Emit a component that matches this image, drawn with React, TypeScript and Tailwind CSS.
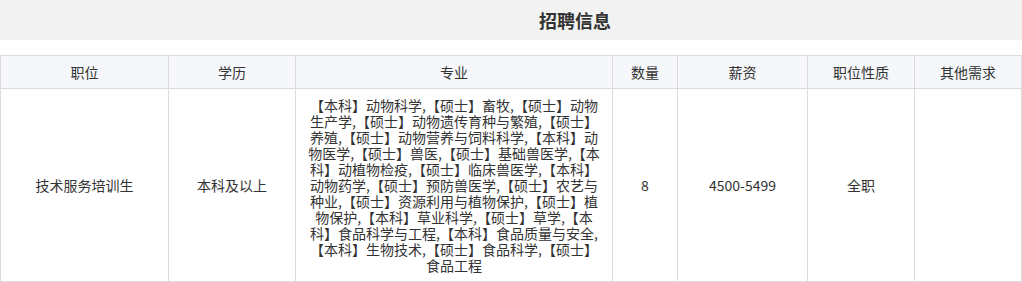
import React from "react";

const FONT = { fontFamily: '"Microsoft YaHei", "Noto Sans CJK SC", "Noto Sans", sans-serif' };

const columns = [
  { label: "职位", width: "w-[168px]" },
  { label: "学历", width: "w-[127px]" },
  { label: "专业", width: "w-[317px]" },
  { label: "数量", width: "w-[65px]" },
  { label: "薪资", width: "w-[130px]" },
  { label: "职位性质", width: "w-[107px]" },
  { label: "其他需求", width: "w-[107px]" },
];

const majors =
  "【本科】动物科学,【硕士】畜牧,【硕士】动物生产学,【硕士】动物遗传育种与繁殖,【硕士】养殖,【硕士】动物营养与饲料科学,【本科】动物医学,【硕士】兽医,【硕士】基础兽医学,【本科】动植物检疫,【硕士】临床兽医学,【本科】动物药学,【硕士】预防兽医学,【硕士】农艺与种业,【硕士】资源利用与植物保护,【硕士】植物保护,【本科】草业科学,【硕士】草学,【本科】食品科学与工程,【本科】食品质量与安全,【本科】生物技术,【硕士】食品科学,【硕士】食品工程";

export default function App() {
  return (
    <div className="w-[1022px] bg-white text-[#333]" style={FONT}>
      {/* 标题栏 */}
      <div className="h-[40px] bg-[#f2f2f2] flex items-center justify-center pl-[128px]">
        <h2 className="text-[18px] font-bold text-[#333]">招聘信息</h2>
      </div>

      <table className="mt-[15px] w-[1022px] table-fixed border-collapse text-[14px]">
        <colgroup>
          {columns.map((c) => (
            <col key={c.label} className={c.width} />
          ))}
        </colgroup>
        <thead>
          <tr className="bg-[#f5f7fa]">
            {columns.map((c) => (
              <th
                key={c.label}
                className="h-[33px] border border-[#dcdcdc] font-normal text-center leading-[16px] p-0"
              >
                {c.label}
              </th>
            ))}
          </tr>
        </thead>
        <tbody>
          <tr>
            <td className="border border-[#dcdcdc] text-center align-middle">技术服务培训生</td>
            <td className="border border-[#dcdcdc] text-center align-middle">本科及以上</td>
            <td className="border border-[#dcdcdc] text-center align-middle px-[10px] py-[8px] leading-[16px]">
              {majors}
            </td>
            <td className="border border-[#dcdcdc] text-center align-middle">8</td>
            <td className="border border-[#dcdcdc] text-center align-middle">4500-5499</td>
            <td className="border border-[#dcdcdc] text-center align-middle">全职</td>
            <td className="border border-[#dcdcdc] text-center align-middle"></td>
          </tr>
        </tbody>
      </table>
    </div>
  );
}
